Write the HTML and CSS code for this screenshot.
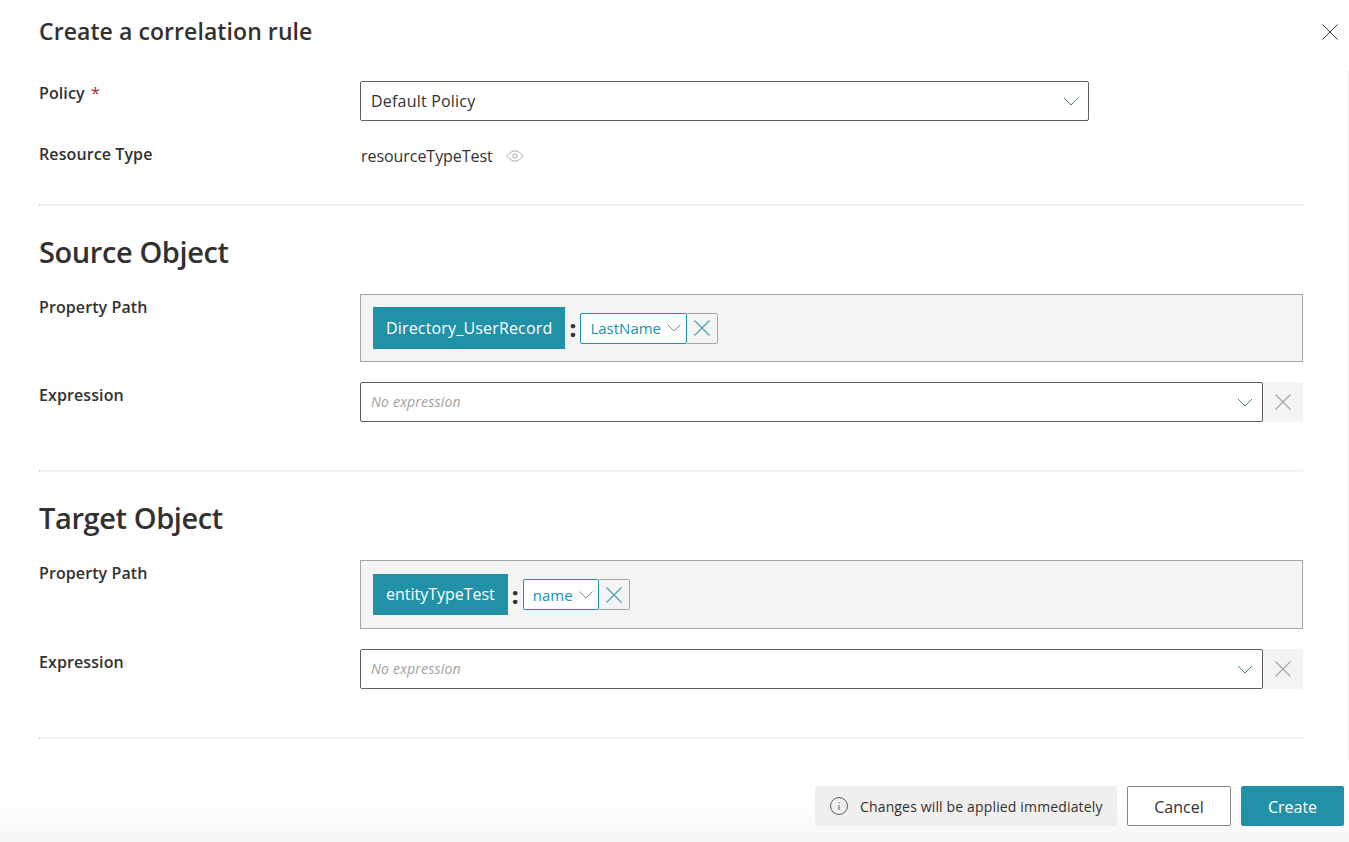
FILE: index.html
```html
<!DOCTYPE html>
<html lang="en">
<head>
    <meta charset="utf-8" />
    <title>Create a correlation rule</title>
    <link rel="stylesheet" href="styles.css">
</head>
<body>
    <div class="panel">
        <div class="cabecera">
            <h1>Create a correlation rule</h1>
            <svg class="cerrar" width="16" height="16" viewBox="0 0 16 16"><path d="M0.500 0.500L15.500 15.500M15.500 0.500L0.500 15.500" stroke="#323130" fill="none"/></svg>
        </div>
        <div class="contenido">
            <div class="seccion primera">
                <div class="fila filaPolicy">
                    <label class="etiqueta">Policy <span class="req">*</span></label>
                    <div class="selector selectorPolicy">
                        <span>Default Policy</span>
                        <svg class="flecha" width="16" height="9" viewBox="0 0 16 9"><path d="M1 1L8 8L15 1" stroke="#40808f" fill="none"/></svg>
                    </div>
                </div>
                <div class="fila filaTipo">
                    <label class="etiqueta">Resource Type</label>
                    <div class="valorTipo">
                        <span>resourceTypeTest</span>
                        <svg width="18" height="12" viewBox="0 0 18 12"><path d="M1 6C4 2 6.500 1 9 1C11.500 1 14 2 17 6C14 10 11.500 11 9 11C6.500 11 4 10 1 6Z" stroke="#a9a9a9" fill="none"/><circle cx="9" cy="6" r="2.200" stroke="#a9a9a9" fill="none"/></svg>
                    </div>
                </div>
            </div>
            <hr class="separador">

            <div class="seccion">
                <h2>Source Object</h2>
                <div class="fila filaRuta">
                    <label class="etiqueta">Property Path</label>
                    <div class="cajaRuta">
                        <span class="tag">Directory_UserRecord</span>
                        <span class="dosPuntos">:</span>
                        <div class="miniSelector">
                            <span>LastName</span>
                            <svg width="14" height="8" viewBox="0 0 14 8"><path d="M0.500 0.500L7 7L13.500 0.500" stroke="#8a8a8a" fill="none"/></svg>
                        </div>
                        <div class="miniBorrar">
                            <svg width="16" height="16" viewBox="0 0 16 16"><path d="M0.500 0.500L15.500 15.500M15.500 0.500L0.500 15.500" stroke="#4f9fb2" stroke-width="1.200" fill="none"/></svg>
                        </div>
                    </div>
                </div>
                <div class="fila filaExpresion">
                    <label class="etiqueta">Expression</label>
                    <div class="selector selectorExpresion">
                        <span class="vacio">No expression</span>
                        <svg class="flecha" width="16" height="9" viewBox="0 0 16 9"><path d="M1 1L8 8L15 1" stroke="#40808f" fill="none"/></svg>
                    </div>
                    <div class="borrar">
                        <svg width="16" height="16" viewBox="0 0 16 16"><path d="M0.500 0.500L15.500 15.500M15.500 0.500L0.500 15.500" stroke="#a6a6a6" stroke-width="1.200" fill="none"/></svg>
                    </div>
                </div>
            </div>
            <hr class="separador">

            <div class="seccion seccionDestino">
                <h2>Target Object</h2>
                <div class="fila filaRuta">
                    <label class="etiqueta">Property Path</label>
                    <div class="cajaRuta">
                        <span class="tag">entityTypeTest</span>
                        <span class="dosPuntos">:</span>
                        <div class="miniSelector">
                            <span>name</span>
                            <svg width="14" height="8" viewBox="0 0 14 8"><path d="M0.500 0.500L7 7L13.500 0.500" stroke="#8a8a8a" fill="none"/></svg>
                        </div>
                        <div class="miniBorrar">
                            <svg width="16" height="16" viewBox="0 0 16 16"><path d="M0.500 0.500L15.500 15.500M15.500 0.500L0.500 15.500" stroke="#4f9fb2" stroke-width="1.200" fill="none"/></svg>
                        </div>
                    </div>
                </div>
                <div class="fila filaExpresion">
                    <label class="etiqueta">Expression</label>
                    <div class="selector selectorExpresion">
                        <span class="vacio">No expression</span>
                        <svg class="flecha" width="16" height="9" viewBox="0 0 16 9"><path d="M1 1L8 8L15 1" stroke="#40808f" fill="none"/></svg>
                    </div>
                    <div class="borrar">
                        <svg width="16" height="16" viewBox="0 0 16 16"><path d="M0.500 0.500L15.500 15.500M15.500 0.500L0.500 15.500" stroke="#a6a6a6" stroke-width="1.200" fill="none"/></svg>
                    </div>
                </div>
            </div>
            <hr class="separador">
        </div>
        <div class="pie">
            <div class="aviso">
                <svg width="18" height="18" viewBox="0 0 18 18"><circle cx="9" cy="9" r="8.500" stroke="#605e5c" fill="none"/><path d="M9 8V13M9 5V6.200" stroke="#605e5c" fill="none"/></svg>
                <span>Changes will be applied immediately</span>
            </div>
            <button class="boton botonCancelar">Cancel</button>
            <button class="boton botonCrear">Create</button>
        </div>
    </div>
</body>
</html>
```

FILE: styles.css
```css
* {
    box-sizing: border-box;
    margin: 0;
    padding: 0;
}
body {
    background: #fff;
    color: #323130;
    font-family: "Open Sans", "Noto Sans", sans-serif;
    font-size: 16px;
    overflow: hidden;
}
.panel {
    height: 842px;
    display: flex;
    flex-direction: column;
    background: linear-gradient(to bottom, #fff 0, #fff 800px, #f6f6f6 842px);
}
.cabecera {
    height: 71px;
    padding: 14px 11px 0 39px;
    display: flex;
    justify-content: space-between;
}
h1 {
    font-size: 23px;
    line-height: 34px;
    font-weight: 600;
    letter-spacing: 0.08px;
}
.cerrar {
    margin-top: 10px;
}
.contenido {
    height: 689px;
    padding: 0 45px 0 39px;
    border-right: 1px solid #f0f0f0;
}
.seccion {
    height: 264px;
    padding-top: 27px;
}
.seccion.primera {
    height: 133px;
    padding-top: 10px;
}
.seccion.seccionDestino {
    height: 265px;
}
.separador {
    height: 2px;
    border-style: solid;
    border-width: 1px;
    border-color: #eeeeee #f4f4f4 #f4f4f4 #a9a9a9;
}
h2 {
    font-size: 29px;
    line-height: 38px;
    font-weight: 600;
    letter-spacing: -0.4px;
}
.fila {
    display: flex;
    align-items: flex-start;
}
.etiqueta {
    width: 321px;
    flex: none;
    font-size: 16px;
    font-weight: 600;
    line-height: 24px;
    letter-spacing: 0.1px;
}
.req {
    color: #a4262c;
    font-weight: 400;
    margin-left: 2px;
}
.selector {
    height: 40px;
    border: 1px solid #605e5c;
    border-radius: 2px;
    padding: 0 9px 0 10px;
    display: flex;
    align-items: center;
    justify-content: space-between;
    font-size: 16px;
    letter-spacing: 0.2px;
}
.selectorPolicy {
    width: 729px;
}
.selectorExpresion {
    width: 903px;
}
.vacio {
    color: #a19f9d;
    font-style: italic;
    font-size: 14px;
    letter-spacing: 0.2px;
    margin-top: -1px;
}
.filaTipo {
    margin-top: 21px;
}
.valorTipo {
    display: flex;
    align-items: center;
    gap: 13px;
    padding: 1px 0 0 1px;
    line-height: 26px;
    letter-spacing: -0.05px;
}
.filaRuta {
    margin-top: 23px;
}
.filaExpresion {
    margin-top: 20px;
}
.filaRuta .etiqueta, .filaExpresion .etiqueta {
    padding-top: 1px;
}
.cajaRuta {
    width: 943px;
    height: 68px;
    background: #f4f4f4;
    border: 1px solid #a6a6a6;
    padding: 0 12px;
    display: flex;
    align-items: center;
}
.seccionDestino .cajaRuta {
    height: 69px;
}
.tag {
    height: 42px;
    line-height: 42px;
    padding: 0 13px;
    background: #2191a8;
    color: #fff;
    font-size: 16px;
    letter-spacing: 0.17px;
}
.seccionDestino .tag {
    height: 41px;
    line-height: 41px;
    letter-spacing: -0.02px;
}
.dosPuntos {
    width: 15px;
    flex: none;
    text-align: center;
    font-size: 22px;
    font-weight: 800;
    line-height: 42px;
    color: #323130;
}
.miniSelector {
    height: 31px;
    background: #fff;
    border: 1px solid #2191a8;
    border-radius: 2px;
    padding: 0 5px 0 9px;
    display: flex;
    align-items: center;
    gap: 6px;
    color: #2191a8;
    font-size: 15px;
}
.miniBorrar {
    width: 31px;
    height: 31px;
    border: 1px solid #a6a6a6;
    border-left: none;
    border-radius: 0 2px 2px 0;
    display: flex;
    align-items: center;
    justify-content: center;
}
.borrar {
    width: 40px;
    height: 40px;
    background: #f4f4f4;
    border-radius: 0 2px 2px 0;
    display: flex;
    align-items: center;
    justify-content: center;
}
.pie {
    padding: 26px 5px 0 0;
    display: flex;
    justify-content: flex-end;
    gap: 10px;
}
.aviso {
    width: 302px;
    height: 40px;
    background: #f0efee;
    padding: 0 0 0 15px;
    display: flex;
    align-items: center;
    gap: 12px;
    font-size: 14px;
    letter-spacing: 0.15px;
    white-space: nowrap;
}
.boton {
    width: 104px;
    height: 40px;
    border-radius: 2px;
    font-family: inherit;
    font-size: 16px;
    padding-top: 2px;
}
.botonCancelar {
    background: #fff;
    border: 1px solid #8a8886;
    color: #323130;
}
.botonCrear {
    width: 103px;
    background: #2191a8;
    border: none;
    color: #fff;
}
```
